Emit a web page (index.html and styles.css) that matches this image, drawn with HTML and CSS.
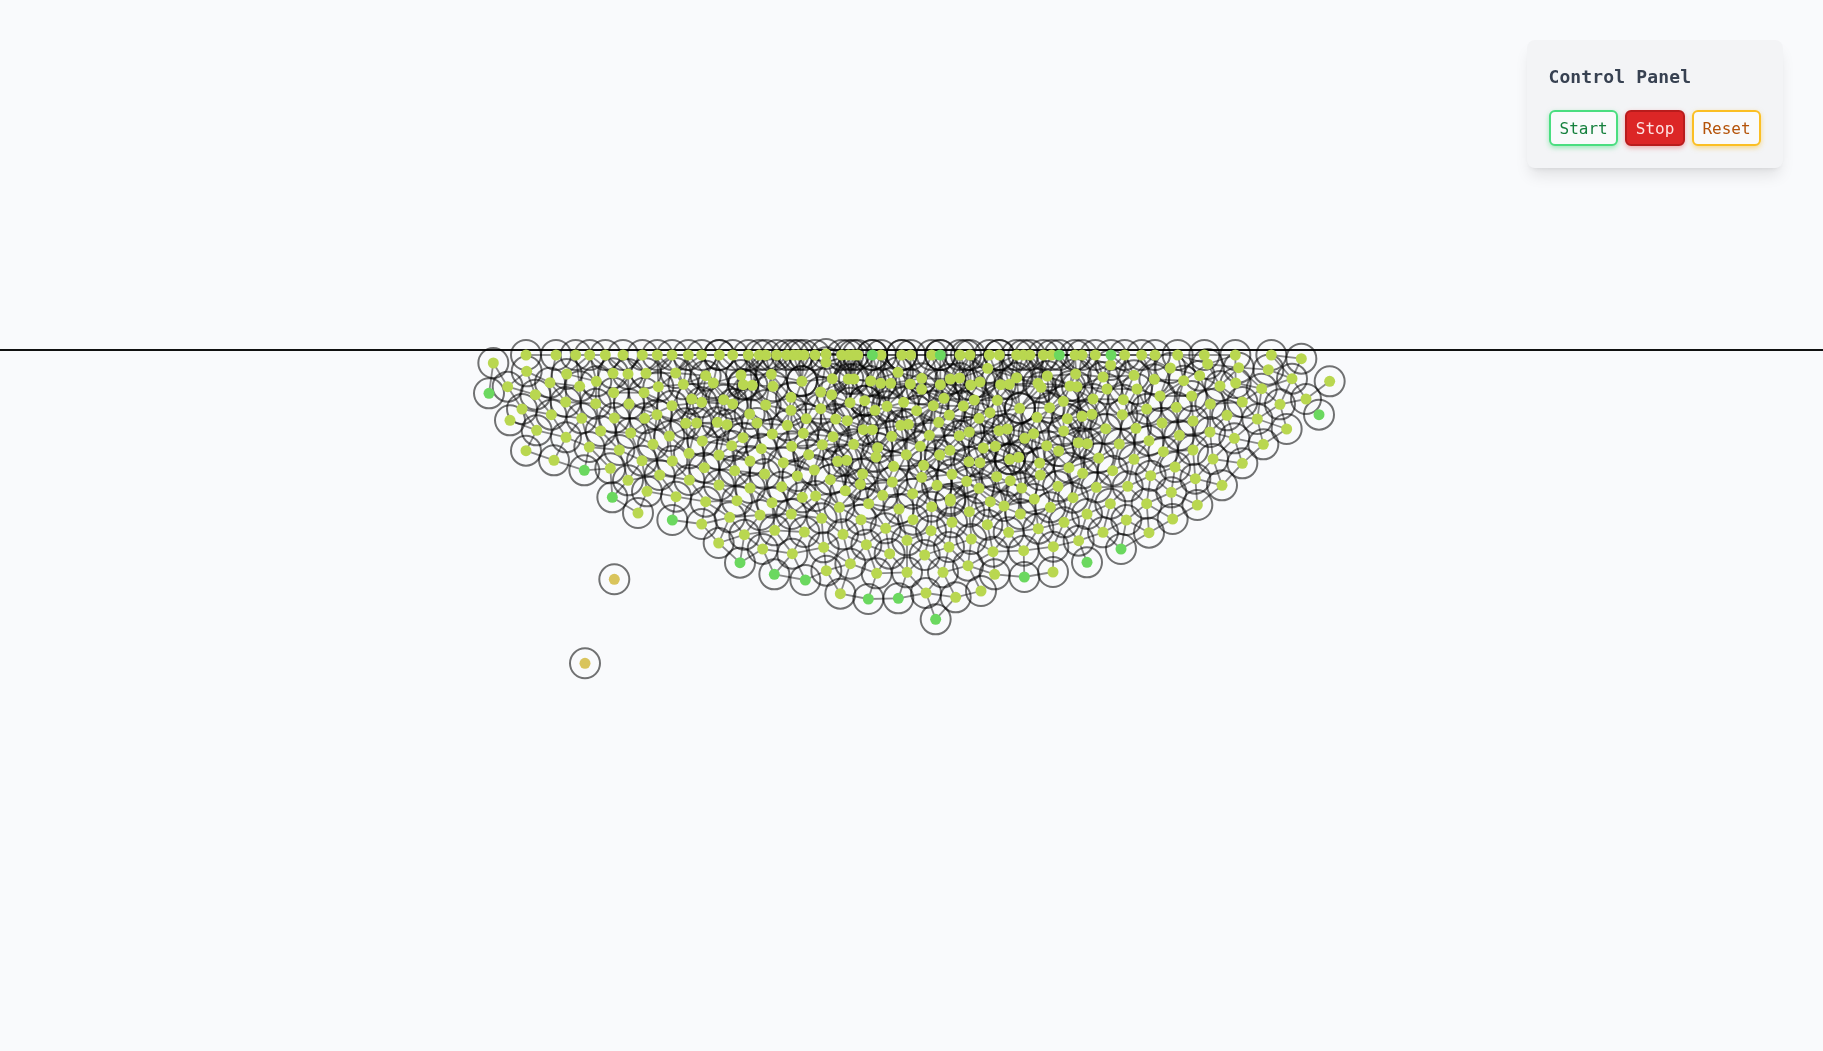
FILE: index.html
```html
<!DOCTYPE html>
<html lang="en">
<head>
    <meta charset="UTF-8">
    <title>Control Panel</title>
    <link rel="stylesheet" href="styles.css">
</head>
<body>
    <canvas id="sim" width="1823" height="1051"></canvas>

    <div class="panel">
        <h2 class="panel-title">Control Panel</h2>
        <div class="panel-buttons">
            <button class="btn btn-start">Start</button>
            <button class="btn btn-stop">Stop</button>
            <button class="btn btn-reset">Reset</button>
        </div>
    </div>

    <script src="app.js"></script>
</body>
</html>
```

FILE: styles.css
```css
body {
    margin: 0;
    background-color: #f9fafc;
    font-family: "DejaVu Sans Mono", "Liberation Mono", monospace;
    overflow: hidden;
}
#sim {
    display: block;
}
.panel {
    position: absolute;
    top: 40px;
    right: 40px;
    width: 256px;
    box-sizing: border-box;
    padding: 23px 22px 22px 22.4px;
    background-color: #f3f4f6;
    border-radius: 8px;
    box-shadow: 0 10px 15px -3px rgba(0, 0, 0, 0.1), 0 4px 6px -4px rgba(0, 0, 0, 0.1);
}
.panel-title {
    margin: 0 0 19px -1px;
    font-size: 18px;
    line-height: 28px;
    font-weight: 700;
    letter-spacing: 0.15px;
    color: #374151;
}
.panel-buttons {
    display: flex;
    gap: 7.6px;
}
.btn {
    padding: 7px 0 5px 0;
    border: 2px solid;
    border-radius: 6px;
    font-family: inherit;
    font-size: 16px;
    line-height: 20px;
    cursor: pointer;
}
.btn-start {
    flex: 0 0 68.4px;
    background-color: #f9fafb;
    border-color: #4ade80;
    color: #15803d;
    box-shadow: 0 2px 5px rgba(74, 222, 128, 0.5);
}
.btn-stop {
    flex: 0 0 59.4px;
    background-color: #dc2626;
    border-color: #b91c1c;
    color: #fee2e2;
    box-shadow: 0 2px 5px rgba(220, 38, 38, 0.35);
}
.btn-reset {
    flex: 0 0 68.4px;
    background-color: #f9fafb;
    border-color: #fbbf24;
    color: #b45309;
    box-shadow: 0 2px 5px rgba(251, 191, 36, 0.5);
}
```

FILE: app.js
```js
// positions come in tiles: x,y are 3x offsets from the tile origin
const tiles = [
    { x: 460, y: 330, pts: [
        [100,99],[198,75],[288,75],[347,75],[389,75],[436,75],[489,75],[547,75],[592,75],[636,75],[685,75],
        [200,124],[320,132],[459,130],[504,132],[558,130],[647,129],
        [143,170],[270,158],[359,169],[409,154],[670,163],[595,170],[461,188],[552,188],[226,194],
        [186,237],[317,216],[407,221],[507,222],[636,227],[695,207],
        [150,271],[274,254],[365,265],[463,264],[554,265],[591,254],[677,280],[710,279],
        [230,301],[318,322],[422,303],[512,309],[628,318],
        [388,351],[478,360],[579,343],[687,370],
        [198,362],[282,391],[451,415],[546,392],[637,393],
        [599,435],[504,451],[688,450],[561,484],[648,500],[534,549]
    ], green: [[87,190],[373,421],[457,502]] },
    { x: 700, y: 340, pts: [
        [5,45],[58,45],[98,45],[145,45],[178,45],[197,45],[230,45],
        [17,107],[40,129],[123,105],[130,134],[157,136],[214,103],[219,139],
        [5,187],[71,179],[98,192],[197,195],
        [149,222],[52,247],[81,254],[171,249],
        [7,303],[129,293],[95,317],[217,282],[184,326],
        [57,345],[150,363],[13,383],[104,392],[194,402],
        [57,435],[150,444]
    ], green: [] },
    { x: 780, y: 340, pts: [
        [20,45],[40,45],[55,45],[72,45],[105,45],[138,42],[185,45],[205,45],[220,45],[233,45],[303,45],
        [365,45],[392,45],[455,45],[540,45],[570,45],[628,45],[658,45],[710,45],[730,45],[750,45],[790,45],[815,45],
        [138,67],[623,85],[354,97],
        [66,124],[157,116],[205,117],[222,117],[272,123],[302,130],[332,130],[391,132],[425,115],[425,148],
        [481,134],[511,117],[539,114],[572,135],[600,126],[662,134],[688,133],[710,113],[774,130],[783,142],[802,108],
        [33,172],[122,156],[155,164],[210,188],[254,182],[371,187],[285,211],[321,199],[410,212],[460,197],
        [492,175],[550,198],[583,180],[652,181],[630,218],[719,205],[809,203],
        [33,211],[122,206],[79,236],[167,237],[202,242],[508,225],[597,235],[771,232],[476,247],
        [22,256],[250,269],[277,269],[362,256],[385,253],[568,276],[657,272],[682,267],[761,281],[734,295],[448,286],[538,287],
        [70,280],[159,290],[335,289],
        [35,319],[127,314],[221,313],[293,323],[288,351],[421,319],[510,331],[610,324],[646,319],[800,317],[836,333],
        [86,344],[379,344],[479,345],[173,364],[200,361],[567,365],[600,368],[689,358],[716,352],[779,369],[10,368],
        [341,379],[431,376],[103,390],[52,408],[248,402],[516,403],[650,410],[781,405],
        [151,419],[337,426],[425,412],[241,433],[471,436],[560,424],[691,422],[597,445],[725,444],[834,439],[5,440],
        [196,452],[308,466],[398,461],[67,472],[107,468],[511,477],[763,477]
    ], green: [[277,45],[481,45],[838,45]] },
    { x: 1060, y: 335, pts: [
        [45,60],[66,60],[106,60],[194,60],[245,60],[285,60],[353,60],[433,60],[526,60],[634,60],[724,71],
        [152,90],[443,87],[536,98],[625,104],[331,99],
        [47,117],[129,126],[222,121],[283,133],[371,137],[419,122],[527,144],[480,153],[696,131],[809,139],
        [30,153],[51,155],[141,162],[231,162],[605,161],
        [10,199],[99,192],[190,194],[300,183],[395,183],[451,207],[547,201],[660,208],[738,192],
        [22,251],[66,244],[96,238],[187,239],[260,222],[349,217],[501,241],[592,252],
        [11,288],[137,281],[228,280],[306,264],[399,258],[450,291],[680,282],
        [55,323],[82,326],[178,327],[267,317],[358,301],[523,310],[610,328],
        [116,369],[222,373],[310,350],[399,345],[459,372],[547,385],
        [27,398],[68,415],[158,407],[345,396],[272,422],[406,431],
        [109,457],[203,454],[334,472],[486,451],[39,488]
    ], green: [[153,60],[777,239]] },
    { x: 660, y: 500, pts: [
        [125,72],[176,129],[541,281],[798,279],[887,292],
        [137,5],[231,2],[336,8],[209,52],[300,45],[394,42],[538,22],[626,11],[717,27],[815,20],[871,3],
        [253,104],[344,91],[433,96],[485,55],[549,103],[603,59],[677,85],[759,59],[813,92],[876,67],[741,121],
        [308,147],[397,161],[491,142],[619,134],[689,161],[794,165],[867,141],
        [571,191],[499,212],[650,220],[741,217],[849,217]
    ], green: [[37,60],[240,188],[343,223],[436,240],[625,297],[715,295],[827,358]] },
    { x: 900, y: 500, pts: [
        [208,35],[262,74],[214,117],[204,197],[279,155],[284,223],[243,273],[312,18],[271,5],[361,42],[326,97],
        [371,152],[459,216],[415,86],[492,67],[460,140],[536,122],[451,22],[561,42],[631,11],[609,97],[679,60],
        [740,11],[747,98],[818,57],[892,15]
    ], green: [[373,231],[561,187],[663,147]] }
];

const LIME = '#b9d750';
const GREEN = '#6bd85f';
const YELLOW = '#d9c45c';
const RADIUS = 15;
const DOT_RADIUS = 5.5;
const LINK_MIN = 22;
const LINK_MAX = 32.5;

const nodes = [];
tiles.forEach(function(tile) {
    tile.pts.forEach(function(p) {
        nodes.push({ x: tile.x + p[0] / 3, y: tile.y + p[1] / 3, color: LIME });
    });
    tile.green.forEach(function(p) {
        nodes.push({ x: tile.x + p[0] / 3, y: tile.y + p[1] / 3, color: GREEN });
    });
});

// the two that broke loose
const loose = [
    { x: 614.3, y: 579.3, color: YELLOW },
    { x: 585, y: 663.3, color: YELLOW }
];

// rings that sit on top of each other and read darker
const doubled = [
    [719, 355], [872, 355], [901.7, 355], [940, 355], [966, 355], [999, 355],
    [1020, 408], [802, 381], [743, 384], [1009.7, 459], [864.7, 400.7]
];

const ctx = document.getElementById('sim').getContext('2d');

// top boundary
ctx.strokeStyle = '#111';
ctx.lineWidth = 2;
ctx.beginPath();
ctx.moveTo(0, 350);
ctx.lineTo(1823, 350);
ctx.stroke();

function ring(x, y) {
    ctx.beginPath();
    ctx.arc(x, y, RADIUS, 0, Math.PI * 2);
    ctx.stroke();
}

ctx.strokeStyle = 'rgba(0, 0, 0, 0.55)';
nodes.concat(loose).forEach(function(n) {
    ring(n.x, n.y);
});
doubled.forEach(function(d) {
    ring(d[0], d[1]);
});

ctx.strokeStyle = 'rgba(0, 0, 0, 0.45)';
ctx.lineWidth = 1.8;
for (let i = 0; i < nodes.length; i++) {
    for (let j = i + 1; j < nodes.length; j++) {
        const dist = Math.hypot(nodes[i].x - nodes[j].x, nodes[i].y - nodes[j].y);
        if (dist > LINK_MIN && dist < LINK_MAX) {
            ctx.beginPath();
            ctx.moveTo(nodes[i].x, nodes[i].y);
            ctx.lineTo(nodes[j].x, nodes[j].y);
            ctx.stroke();
        }
    }
}

nodes.concat(loose).forEach(function(n) {
    ctx.fillStyle = n.color;
    ctx.beginPath();
    ctx.arc(n.x, n.y, DOT_RADIUS, 0, Math.PI * 2);
    ctx.fill();
});
```
